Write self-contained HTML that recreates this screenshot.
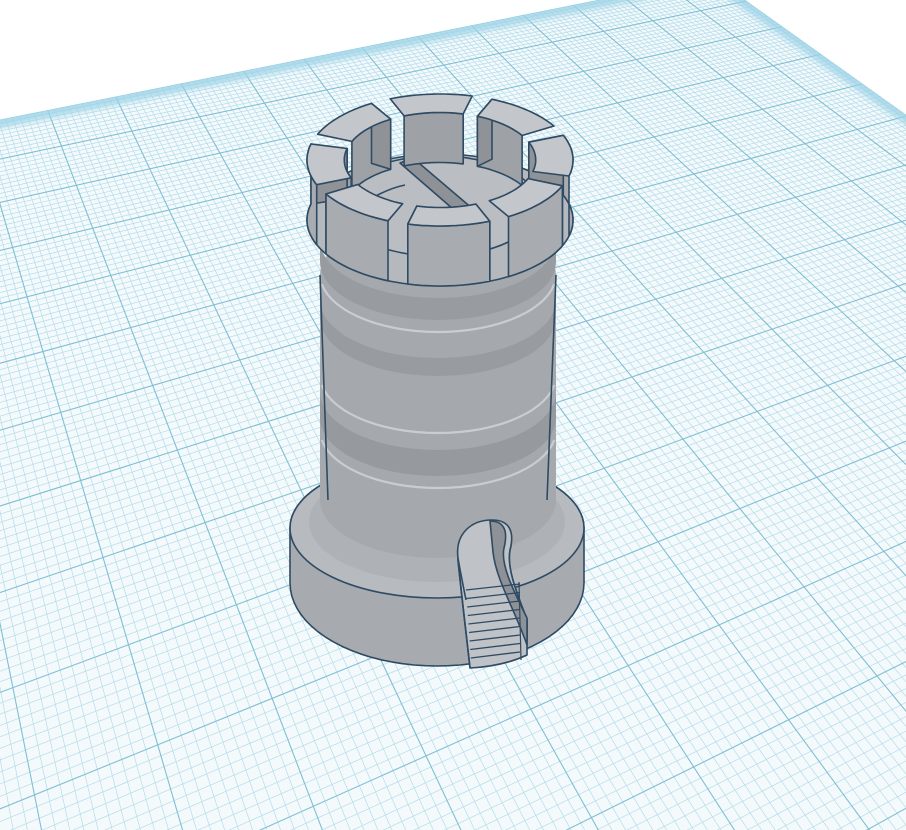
<!DOCTYPE html>
<html><head><meta charset="utf-8"><style>
html,body{margin:0;padding:0;background:#fff;width:906px;height:830px;overflow:hidden}
svg{display:block}
</style></head><body>
<svg id="s" width="906" height="830" viewBox="0 0 906 830" xmlns="http://www.w3.org/2000/svg">
<defs>
<clipPath id="plane"><polygon points="-3000,720 713,-23 3000,1610 -3000,1610"/></clipPath>
<clipPath id="frame"><rect x="0" y="0" width="906" height="830"/></clipPath>
<filter id="bl" x="-10%" y="-10%" width="120%" height="120%"><feGaussianBlur stdDeviation="3"/></filter>
</defs>
<g clip-path="url(#frame)">
<g clip-path="url(#plane)">
<rect x="-10" y="-30" width="930" height="870" fill="#f4fafc"/>
<g id="minor" stroke="#b4dcea" stroke-width="0.7" fill="none"></g>
<g id="major" stroke="#7fbfd4" stroke-width="1.1" fill="none"></g>
<polyline points="-200,160 713,-23 1000,182" stroke="#9dd3e6" stroke-width="16" fill="none" opacity="0.8" filter="url(#bl)"/>
</g>
</g>
<g id="tower" stroke="#2f4a63" stroke-width="1.6" stroke-linejoin="round"></g>
</svg>
<script>
(function(){
var NS="http://www.w3.org/2000/svg";
function el(p,tag,a){var e=document.createElementNS(NS,tag);for(var k in a)e.setAttribute(k,a[k]);p.appendChild(e);return e;}
var minor=document.getElementById('minor'),major=document.getElementById('major');
var A=[713,-23],VA=[3348,-550],VB=[-271,-725];
function clipLine(P,Q){
  return [P,Q];
}
function fam(V0,Vdir,d){
  for(var j=0;j<4000;j++){
    var kd=-d*j/10; if(kd<=-0.985)break;
    var t=kd/(1+kd);
    var P=[A[0]+(Vdir[0]-A[0])*t,A[1]+(Vdir[1]-A[1])*t];
    var E=[P[0]+(P[0]-V0[0])*6,P[1]+(P[1]-V0[1])*6];
    el(j%10==0?major:minor,'line',{x1:V0[0],y1:V0[1],x2:E[0],y2:E[1]});
  }
}
fam(VB,VA,0.0168);
fam(VA,VB,0.033);

var T=document.getElementById('tower');
function ell(cx,cy,rx,ry,th){return [cx+rx*Math.cos(th),cy+ry*Math.sin(th)];}
function arc(cx,cy,rx,ry,a1,a2,n){var p=[];for(var i=0;i<=n;i++){var th=(a1+(a2-a1)*i/n)*Math.PI/180;p.push(ell(cx,cy,rx,ry,th));}return p;}
function poly(pts,fill,extra){var a={points:pts.map(function(q){return q[0].toFixed(1)+','+q[1].toFixed(1)}).join(' '),fill:fill};for(var k in extra)a[k]=extra[k];return el(T,'polygon',a);}
function cyl(cx,ytop,ybot,rx,ryt,ryb,fill){
  var top=arc(cx,ytop,rx,ryt,180,360,40);var bot=arc(cx,ybot,rx,ryb,0,180,40);
  return poly(top.concat(bot),fill);
}
cyl(437,528,583,147,70,83,'#a7abaf');
el(T,'ellipse',{cx:437,cy:528,rx:147,ry:70,fill:'#b7babe'});
el(T,'ellipse',{cx:437,cy:522,rx:128,ry:60,fill:'#aeb2b6',stroke:'none'});
el(T,'path',{d:'M470,668 C467,640 462,600 458,560 C455,535 470,520 492,520 C512,520 514,535 510,550 C506,570 520,600 527,620 L527,655 C510,663 490,667 470,668 Z',fill:'#bfc2c6'});
var body=cyl(438,275,500,118,58,58,'#a5a9ad');
body.setAttribute('stroke','none');
function band(y1,y2,fill){var p=arc(438,y1,118,58,0,180,40).concat(arc(438,y2,118,58,180,0,40));poly(p,fill,{stroke:'none'});}
band(240,262,'#989ca1');band(300,318,'#989ca1');band(392,418,'#969a9f');
function hl(y){var p=arc(438,y,118,58,10,170,30);el(T,'polyline',{points:p.map(function(q){return q.join(',')}).join(' '),fill:'none',stroke:'#c9ccd0','stroke-width':2.2});}
hl(274);hl(375);hl(430);
el(T,'line',{x1:320,y1:275,x2:328,y2:500});el(T,'line',{x1:556,y1:275,x2:547,y2:500});
el(T,'path',{d:'M466,600 C463,585 460,570 458,558 C455,535 470,520 492,520 C512,520 514,535 510,550 C506,570 520,600 527,620 L527,640',fill:'#bfc2c6'});
el(T,'path',{d:'M490,521 C505,521 508,532 504,548 C500,566 516,595 527,618 L527,645 C515,610 496,580 493,552 Z',fill:'#8e9297'});
el(T,'path',{d:'M470,668 C467,640 462,600 458,560',fill:'none'});
for(var i=0;i<9;i++){var y=590+i*8.5;el(T,'line',{x1:466+i*0.6,y1:y,x2:520,y2:y-6,'stroke-width':1.3});}
el(T,'path',{d:'M519,582 L521,660',fill:'none','stroke-width':1.2});
var cx=440,cy=220,R=133,ry=66,h=60,ir=0.72;
el(T,'ellipse',{cx:cx,cy:cy,rx:R,ry:ry,fill:'#b5b8bc'});
el(T,'ellipse',{cx:cx-2,cy:cy-14,rx:R*0.76,ry:ry*0.76,fill:'#babdc1'});
poly([[400,163],[413,158],[480,215],[468,222]],'#8e9297');
el(T,'path',{d:'M372,198 Q390,188 405,185',fill:'none'});
var angs=[];for(var k=0;k<8;k++)angs.push(86+45*k);
angs.sort(function(a,b){return Math.sin(a*Math.PI/180)-Math.sin(b*Math.PI/180)});
angs.forEach(function(c){
  var a1=c-18,a2=c+18,s=Math.sin(c*Math.PI/180);
  var yt=cy-h;
  if(s<0.2){
    var it=arc(cx,yt,R*ir,ry*ir,a1,a2,12),ib=arc(cx,cy-10,R*ir,ry*ir,a2,a1,12);
    poly(it.concat(ib),'#9ea2a6');
  }
  [a1,a2].forEach(function(a){
    var r=a*Math.PI/180;
    var o1=ell(cx,yt,R,ry,r),i1=ell(cx,yt,R*ir,ry*ir,r),
        o2=ell(cx,cy,R,ry,r),i2=ell(cx,cy-10,R*ir,ry*ir,r);
    var cosn=Math.cos(r);
    if((a==a1&&cosn>0.1)||(a==a2&&cosn<-0.1)) poly([o1,i1,i2,o2],'#8f9398');
  });
  if(s>-0.3){
    var ot=arc(cx,yt,R,ry,a1,a2,12),ob=arc(cx,cy,R,ry,a2,a1,12);
    poly(ot.concat(ob),'#a8acb0');
  }
  var tt=arc(cx,yt,R,ry,a1,a2,12).concat(arc(cx,yt,R*ir,ry*ir,a2,a1,12));
  poly(tt,'#c3c6ca');
});
})();
</script>
</body></html>
